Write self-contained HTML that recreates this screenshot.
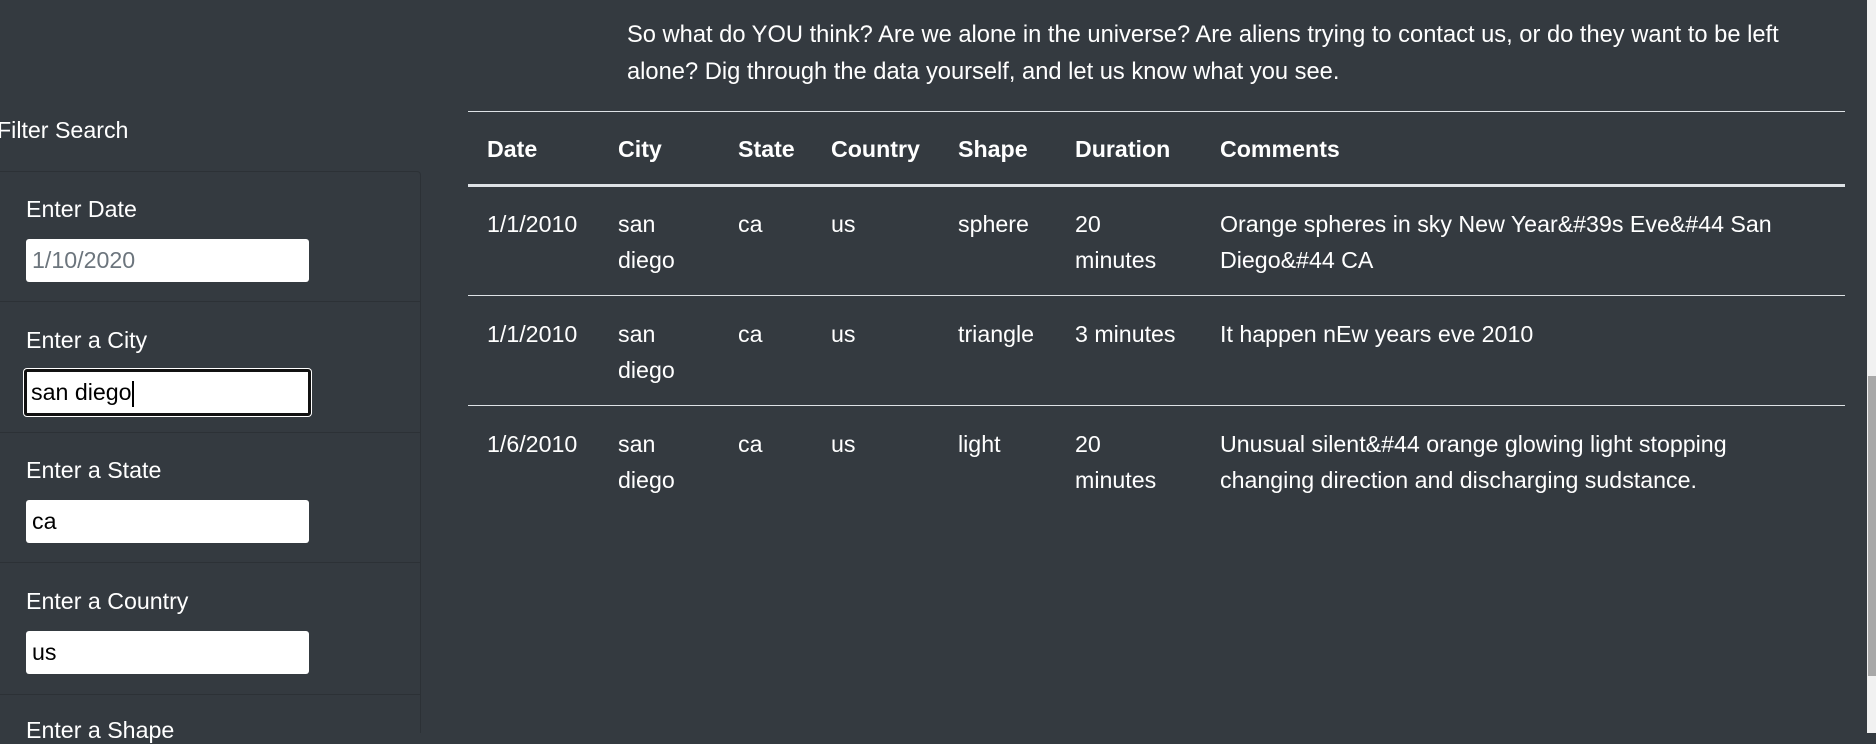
<!DOCTYPE html>
<html><head><meta charset="utf-8"><style>
html,body{margin:0;padding:0;width:1876px;height:733px;overflow:hidden;background:#343a40;color:#fff;font-family:"Liberation Sans",sans-serif;font-size:23.2px}
.a{position:absolute;white-space:nowrap}
.hl{position:absolute;left:468px;width:1377px;background:#dee2e6}
.b{font-weight:bold}
.lbl{position:absolute;left:26px}
.inp{position:absolute;left:26px;width:283px;height:43px;background:#fff;border-radius:3px;color:#000;box-sizing:border-box;padding:0 6px;line-height:43px}
.sep{position:absolute;left:0;width:421px;height:1px;background:#2c3136}
</style></head><body>
<div class="a" style="left:627px;top:17px;line-height:37px;font-size:23.7px">So what do YOU think? Are we alone in the universe? Are aliens trying to contact us, or do they want to be left<br>alone? Dig through the data yourself, and let us know what you see.</div>

<div class="a" style="left:-3px;top:117px">Filter Search</div>
<div style="position:absolute;left:0;top:171px;width:421px;height:562px;border-right:1px solid #2c3136;border-top:1px solid #2c3136;border-top-right-radius:4px;box-sizing:border-box"></div>
<div class="sep" style="top:301px"></div>
<div class="sep" style="top:432px"></div>
<div class="sep" style="top:562px"></div>
<div class="sep" style="top:694px"></div>

<div class="lbl" style="top:196px">Enter Date</div>
<div class="inp" style="top:239px;color:#6c757d">1/10/2020</div>
<div class="lbl" style="top:327px">Enter a City</div>
<div class="inp" style="top:369px;left:24px;width:287px;height:47px;border:3px solid #111;box-shadow:0 0 0 1px #fff;padding:0 4px;line-height:41px">san diego<span style="display:inline-block;width:2px;height:26px;background:#000;vertical-align:middle"></span></div>
<div class="lbl" style="top:457px">Enter a State</div>
<div class="inp" style="top:500px">ca</div>
<div class="lbl" style="top:588px">Enter a Country</div>
<div class="inp" style="top:631px">us</div>
<div class="lbl" style="top:717px">Enter a Shape</div>

<div class="hl" style="top:111px;height:1px"></div>
<div class="hl" style="top:184px;height:3px"></div>
<div class="hl" style="top:295px;height:1px"></div>
<div class="hl" style="top:405px;height:1px"></div>

<div class="a b" style="left:487px;top:136px">Date</div>
<div class="a b" style="left:618px;top:136px">City</div>
<div class="a b" style="left:738px;top:136px">State</div>
<div class="a b" style="left:831px;top:136px">Country</div>
<div class="a b" style="left:958px;top:136px">Shape</div>
<div class="a b" style="left:1075px;top:136px">Duration</div>
<div class="a b" style="left:1220px;top:136px">Comments</div>

<div style="position:absolute;top:206px;left:0;line-height:36px">
<div class="a" style="left:487px">1/1/2010</div>
<div class="a" style="left:618px">san<br>diego</div>
<div class="a" style="left:738px">ca</div>
<div class="a" style="left:831px">us</div>
<div class="a" style="left:958px">sphere</div>
<div class="a" style="left:1075px">20<br>minutes</div>
<div class="a" style="left:1220px">Orange spheres in sky New Year&amp;#39s Eve&amp;#44 San<br>Diego&amp;#44 CA</div>
</div>
<div style="position:absolute;top:316px;left:0;line-height:36px">
<div class="a" style="left:487px">1/1/2010</div>
<div class="a" style="left:618px">san<br>diego</div>
<div class="a" style="left:738px">ca</div>
<div class="a" style="left:831px">us</div>
<div class="a" style="left:958px">triangle</div>
<div class="a" style="left:1075px">3 minutes</div>
<div class="a" style="left:1220px">It happen nEw years eve 2010</div>
</div>
<div style="position:absolute;top:426px;left:0;line-height:36px">
<div class="a" style="left:487px">1/6/2010</div>
<div class="a" style="left:618px">san<br>diego</div>
<div class="a" style="left:738px">ca</div>
<div class="a" style="left:831px">us</div>
<div class="a" style="left:958px">light</div>
<div class="a" style="left:1075px">20<br>minutes</div>
<div class="a" style="left:1220px">Unusual silent&amp;#44 orange glowing light stopping<br>changing direction and discharging sudstance.</div>
</div>

<div style="position:absolute;left:1867px;top:0;width:9px;height:733px;background:#f1f1f1"></div>
<div style="position:absolute;left:1868px;top:376px;width:8px;height:300px;background:#a8a8a8"></div>
</body></html>
